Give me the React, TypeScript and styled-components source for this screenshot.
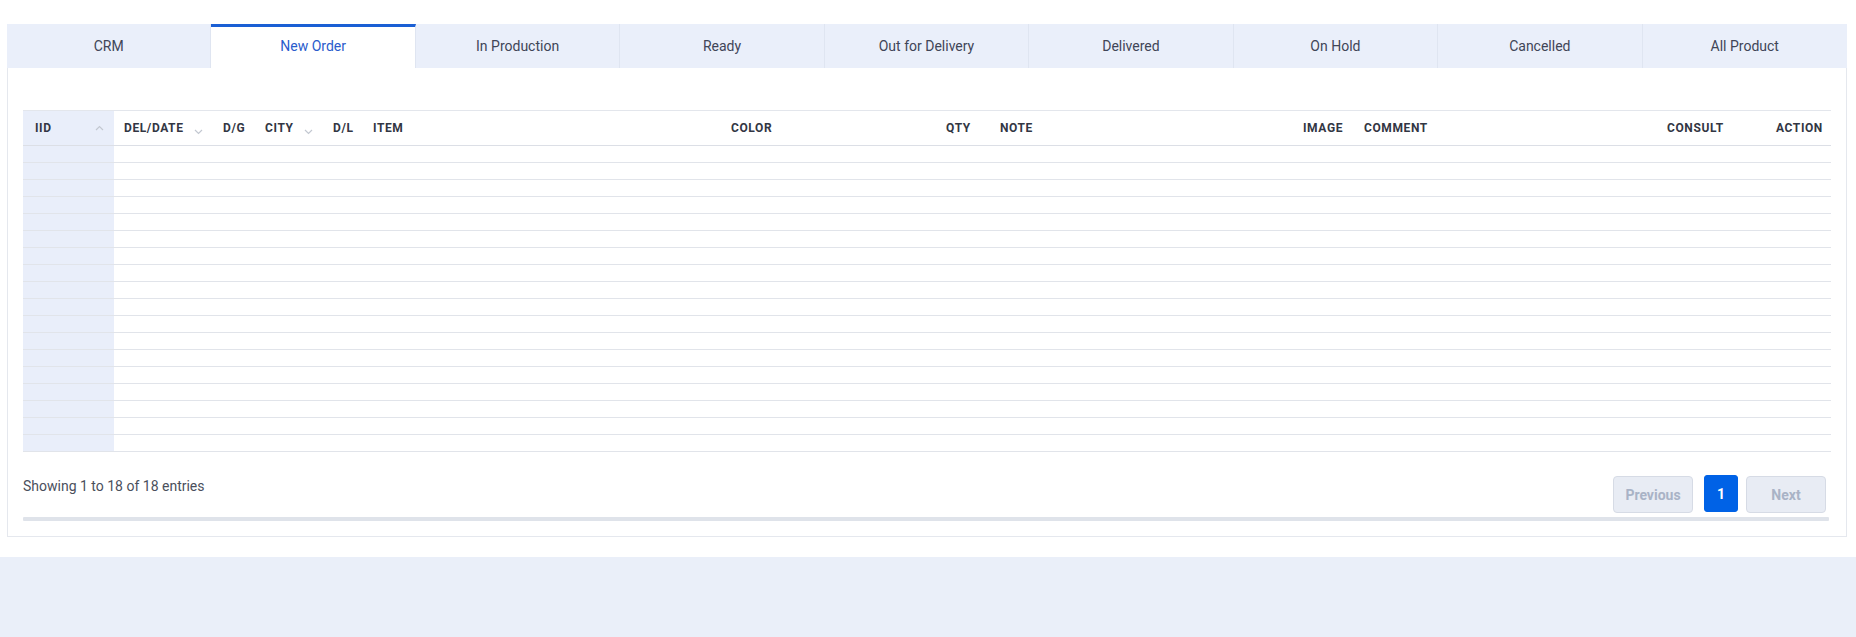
import React from "react";
import styled, { createGlobalStyle } from "styled-components";

const GlobalStyle = createGlobalStyle`
  html, body {
    margin: 0;
    padding: 0;
    background: #eaeff9;
    font-family: Roboto, "Liberation Sans", Arial, sans-serif;
  }
  * { box-sizing: border-box; }
`;

const Page = styled.div`
  background: #ffffff;
  padding: 24px 9px 20px 7px;
  box-shadow: 0 8px 16px rgba(40, 60, 110, 0.12);
`;

const Card = styled.div`
  border: 1px solid #e5e8ee;
  border-top: 0;
  background: #ffffff;
`;

const TabBar = styled.div`
  display: grid;
  grid-template-columns: repeat(9, 1fr);
  height: 44px;
  margin: 0 -1px;
  background: #eaeffa;
`;

const Tab = styled.button<{ $active?: boolean }>`
  display: flex;
  align-items: center;
  justify-content: center;
  height: 44px;
  border: 0;
  border-right: 1px solid #dfe5f1;
  border-top: ${(p) => (p.$active ? "3px solid #1a5fd4" : "0")};
  padding: 0 0 ${(p) => (p.$active ? "4px" : "0")};
  background: ${(p) => (p.$active ? "#ffffff" : "#eaeffa")};
  color: ${(p) => (p.$active ? "#2a5ccc" : "#404557")};
  font-family: Roboto, "Liberation Sans", Arial, sans-serif;
  font-size: 14px;
  cursor: pointer;
  &:last-child { border-right: 0; }
`;

const Body = styled.div`
  padding: 42px 15px 15px 15px;
`;

const Table = styled.table`
  width: 1808px;
  border-collapse: collapse;
  table-layout: fixed;
  border-top: 1px solid #e3e6ec;
`;

const Th = styled.th<{ $sorted?: boolean; $first?: boolean }>`
  height: 35px;
  padding: 0 10px 0 ${(p) => (p.$first ? "12px" : "10px")};
  background: ${(p) => (p.$sorted ? "#e9eefa" : "#ffffff")};
  border-bottom: 1px solid #dcdfe6;
  text-align: left;
  font-size: 12px;
  font-weight: 700;
  letter-spacing: 0.6px;
  color: #323643;
  white-space: nowrap;
`;

const HeadInner = styled.div`
  display: flex;
  align-items: center;
  justify-content: space-between;
`;

const SortIcon = styled.svg<{ $down?: boolean }>`
  width: 9px;
  height: 6px;
  margin-top: ${(p) => (p.$down ? "8px" : "0")};
  flex: none;
`;

const Td = styled.td<{ $sorted?: boolean }>`
  height: 17px;
  padding: 0;
  background: ${(p) => (p.$sorted ? "#e9eefa" : "#ffffff")};
  border-bottom: 1px solid #e1e4ea;
`;

const Footer = styled.div`
  display: flex;
  justify-content: space-between;
  align-items: flex-start;
  margin-top: 24px;
  padding-right: 5px;
`;

const Info = styled.div`
  font-size: 14px;
  line-height: 21px;
  color: #4a4f5c;
`;

const Pager = styled.div`
  display: flex;
  align-items: flex-start;
`;

const PageBtn = styled.button<{ $current?: boolean }>`
  height: 37px;
  min-width: ${(p) => (p.$current ? "34px" : "80px")};
  margin-left: ${(p) => (p.$current ? "11px" : "8px")};
  margin-top: ${(p) => (p.$current ? "-1px" : "0")};
  border-radius: ${(p) => (p.$current ? "3px" : "4px")};
  border: 1px solid ${(p) => (p.$current ? "#0062e6" : "#d6dbe5")};
  background: ${(p) => (p.$current ? "#0062e6" : "#e8ecf4")};
  color: ${(p) => (p.$current ? "#ffffff" : "#a9b3c6")};
  font-family: Roboto, "Liberation Sans", Arial, sans-serif;
  font-size: 14px;
  font-weight: 700;
  padding: 0 10px;
  &:first-child { margin-left: 0; }
`;

const ScrollTrack = styled.div`
  height: 4px;
  margin: 4px 2px 0 0;
  background: #dfe3ea;
  border-radius: 1px;
`;

const tabs = [
  "CRM",
  "New Order",
  "In Production",
  "Ready",
  "Out for Delivery",
  "Delivered",
  "On Hold",
  "Cancelled",
  "All Product",
];

type Col = { label: string; width: number; sort?: "up" | "down" };

const columns: Col[] = [
  { label: "IID", width: 91, sort: "up" },
  { label: "DEL/DATE", width: 99, sort: "down" },
  { label: "D/G", width: 42 },
  { label: "CITY", width: 68, sort: "down" },
  { label: "D/L", width: 40 },
  { label: "ITEM", width: 358 },
  { label: "COLOR", width: 215 },
  { label: "QTY", width: 54 },
  { label: "NOTE", width: 303 },
  { label: "IMAGE", width: 61 },
  { label: "COMMENT", width: 303 },
  { label: "CONSULT", width: 109 },
  { label: "ACTION", width: 65 },
];

const Chevron: React.FC<{ dir: "up" | "down" }> = ({ dir }) => (
  <SortIcon $down={dir === "down"} viewBox="0 0 9 6">
    {dir === "up" ? (
      <path d="M1 5 L4.5 1.5 L8 5" fill="none" stroke="#c3c8d1" strokeWidth="1.2" />
    ) : (
      <path d="M1 1 L4.5 4.5 L8 1" fill="none" stroke="#c3c8d1" strokeWidth="1.2" />
    )}
  </SortIcon>
);

export default function App() {
  const rows = Array.from({ length: 18 }, (_, i) => i);
  return (
    <>
      <GlobalStyle />
      <Page>
        <Card>
          <TabBar>
            {tabs.map((t, i) => (
              <Tab key={t} $active={i === 1}>
                {t}
              </Tab>
            ))}
          </TabBar>
          <Body>
            <Table>
              <colgroup>
                {columns.map((c) => (
                  <col key={c.label} style={{ width: c.width }} />
                ))}
              </colgroup>
              <thead>
                <tr>
                  {columns.map((c, i) => (
                    <Th key={c.label} $sorted={i === 0} $first={i === 0}>
                      <HeadInner>
                        <span>{c.label}</span>
                        {c.sort && <Chevron dir={c.sort} />}
                      </HeadInner>
                    </Th>
                  ))}
                </tr>
              </thead>
              <tbody>
                {rows.map((r) => (
                  <tr key={r}>
                    {columns.map((c, i) => (
                      <Td key={c.label} $sorted={i === 0} />
                    ))}
                  </tr>
                ))}
              </tbody>
            </Table>
            <Footer>
              <Info>Showing 1 to 18 of 18 entries</Info>
              <Pager>
                <PageBtn>Previous</PageBtn>
                <PageBtn $current>1</PageBtn>
                <PageBtn>Next</PageBtn>
              </Pager>
            </Footer>
            <ScrollTrack />
          </Body>
        </Card>
      </Page>
    </>
  );
}
